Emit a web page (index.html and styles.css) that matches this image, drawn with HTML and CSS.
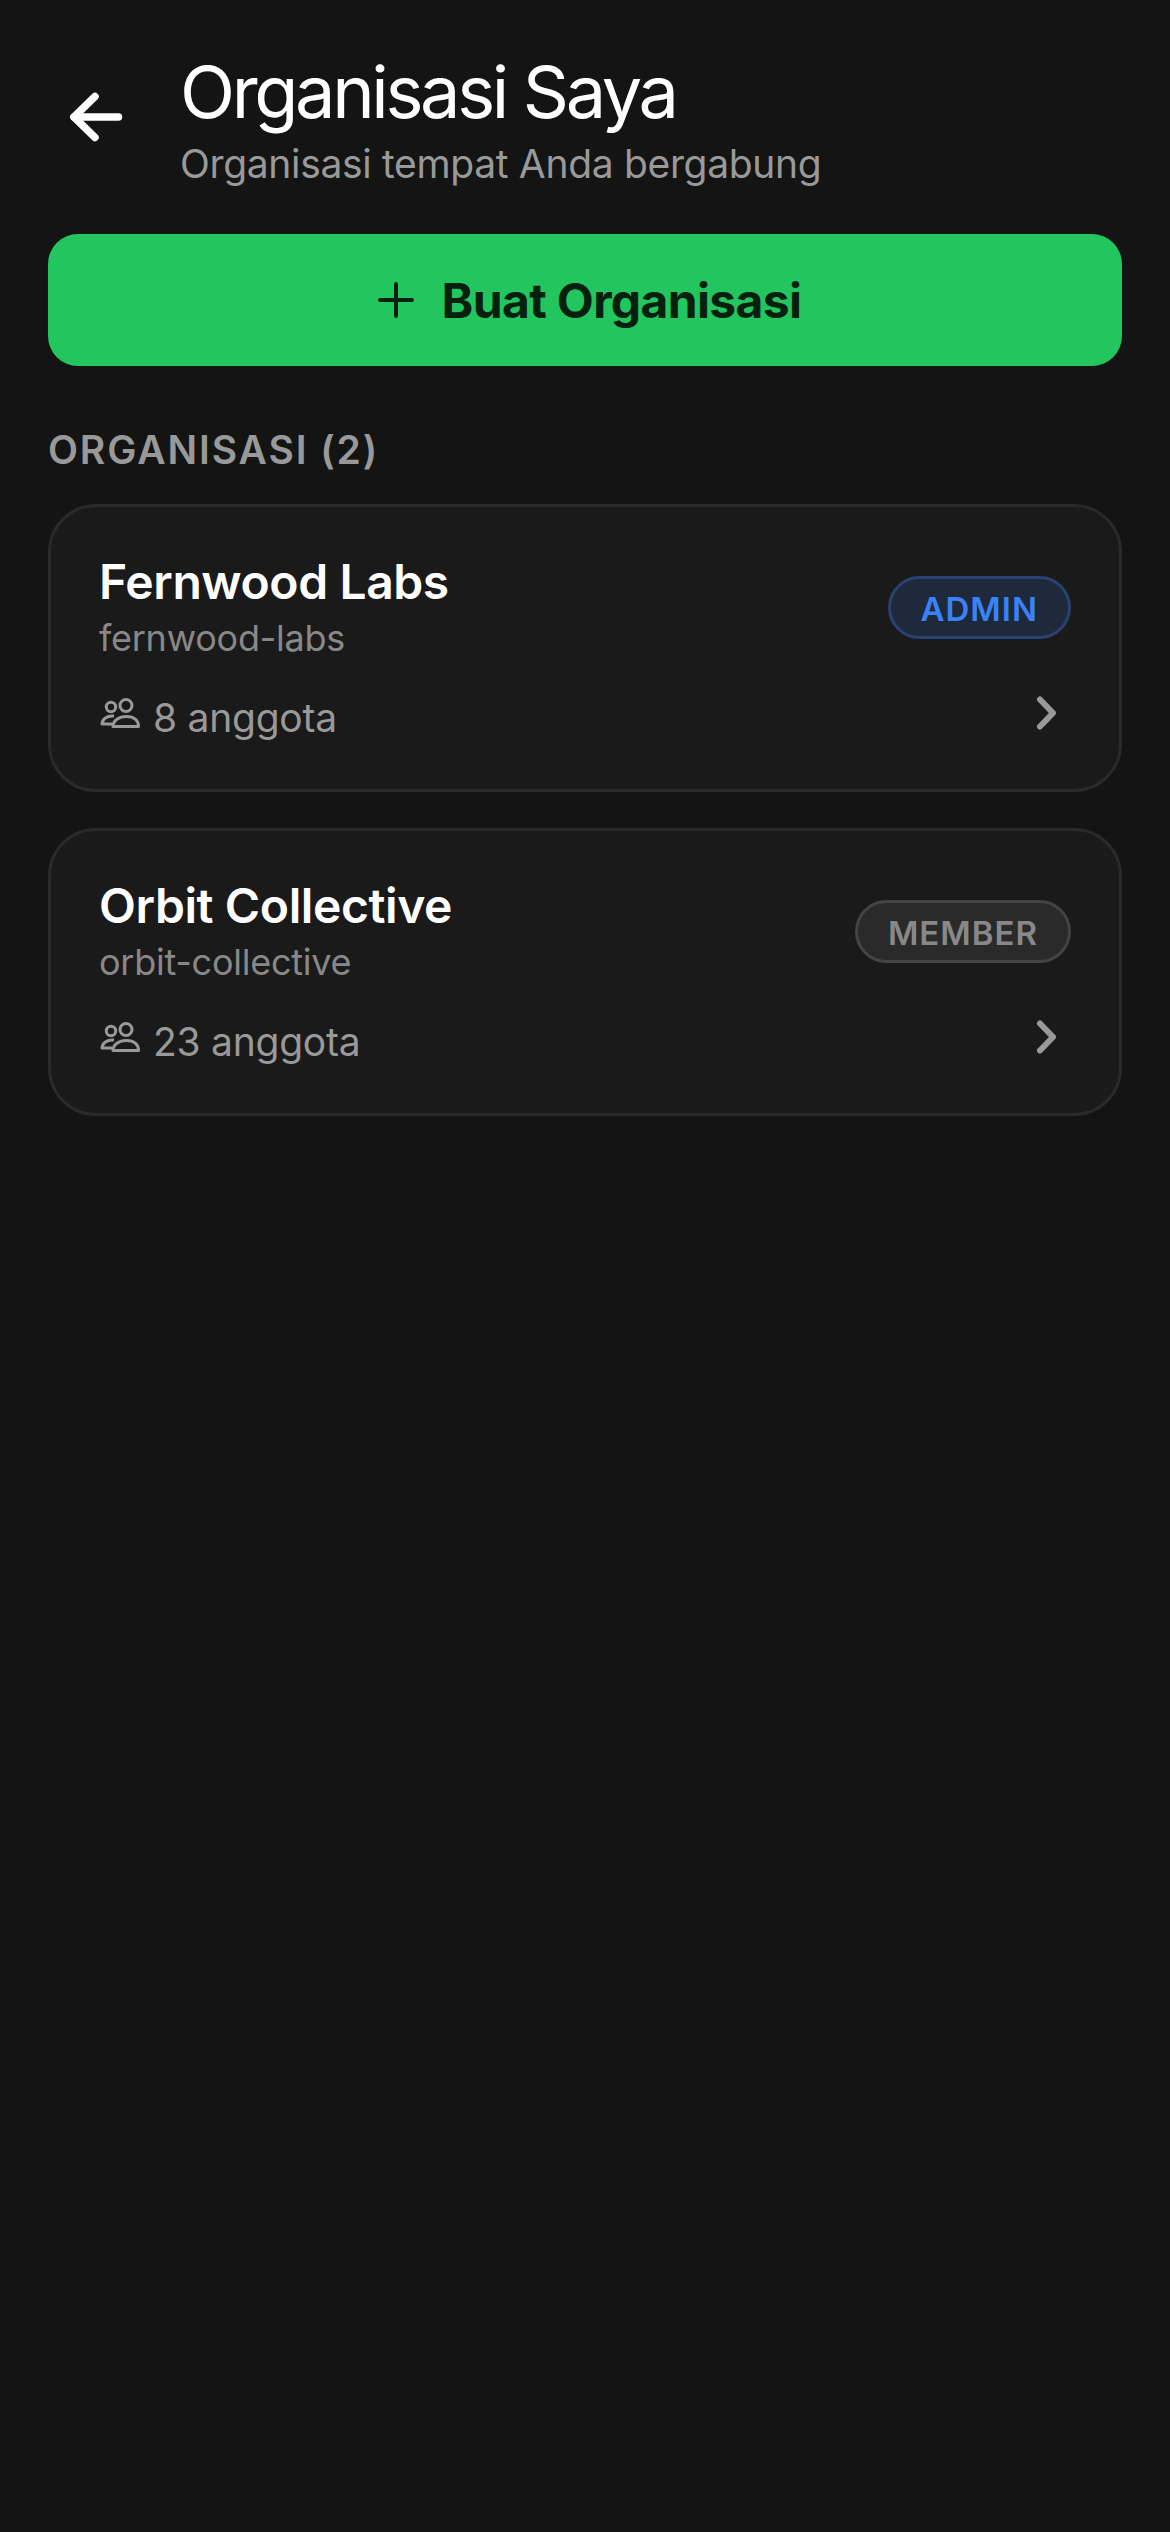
FILE: index.html
```html
<!DOCTYPE html>
<html lang="id">
<head>
<meta charset="utf-8">
<title>Organisasi Saya</title>
<link rel="stylesheet" href="styles.css">
</head>
<body>
<main class="screen">
  <header class="topbar">
    <button class="back" aria-label="Kembali">
      <svg viewBox="0 0 60 60" width="60" height="60" fill="none" stroke="#fff" stroke-width="7.5" stroke-linecap="round" stroke-linejoin="round"><path d="M49.500 30H5"/><path d="M26 9.500 5 30l21 20.500"/></svg>
    </button>
    <div class="heading">
      <h1>Organisasi Saya</h1>
      <p>Organisasi tempat Anda bergabung</p>
    </div>
  </header>

  <button class="create">
    <svg viewBox="0 0 36 36" width="36" height="36" fill="none" stroke="#06200f" stroke-width="4" stroke-linecap="round"><path d="M18 2v32M2 18h32"/></svg>
    <span>Buat Organisasi</span>
  </button>

  <h2 class="section">ORGANISASI (2)</h2>

  <ul class="orgs">
    <li class="card">
      <div class="card-top">
        <div class="names">
          <h3>Fernwood Labs</h3>
          <p>fernwood-labs</p>
        </div>
        <span class="badge admin">ADMIN</span>
      </div>
      <div class="card-bottom">
        <div class="members">
          <svg viewBox="0 0 42 30" width="42" height="30" fill="none" stroke="#999" stroke-width="3" stroke-linejoin="round"><circle cx="12" cy="9" r="4.700"/><circle cx="27" cy="7.500" r="6"/><path d="M15 18c-7-.5-12 3-12 8h10"/><path d="M14 28.500c0-6 6-10 13.500-10s12 4 12 10z"/></svg>
          <span>8 anggota</span>
        </div>
        <svg class="chev" viewBox="0 0 24 36" width="24" height="36" fill="none" stroke="#999" stroke-width="6" stroke-linecap="round" stroke-linejoin="round"><path d="M8 4.500 21 18 8 31.500"/></svg>
      </div>
    </li>
    <li class="card">
      <div class="card-top">
        <div class="names">
          <h3>Orbit Collective</h3>
          <p>orbit-collective</p>
        </div>
        <span class="badge member">MEMBER</span>
      </div>
      <div class="card-bottom">
        <div class="members">
          <svg viewBox="0 0 42 30" width="42" height="30" fill="none" stroke="#999" stroke-width="3" stroke-linejoin="round"><circle cx="12" cy="9" r="4.700"/><circle cx="27" cy="7.500" r="6"/><path d="M15 18c-7-.5-12 3-12 8h10"/><path d="M14 28.500c0-6 6-10 13.500-10s12 4 12 10z"/></svg>
          <span>23 anggota</span>
        </div>
        <svg class="chev" viewBox="0 0 24 36" width="24" height="36" fill="none" stroke="#999" stroke-width="6" stroke-linecap="round" stroke-linejoin="round"><path d="M8 4.500 21 18 8 31.500"/></svg>
      </div>
    </li>
  </ul>
</main>
</body>
</html>
```

FILE: styles.css
```css
* { box-sizing: border-box; }

html, body {
  margin: 0;
  background: #141414;
}

body {
  font-family: Inter, "Noto Sans", sans-serif;
  color: #fff;
}

.screen {
  min-height: 2532px;
  padding: 48px 48px 0;
}

.topbar {
  display: flex;
  align-items: center;
  gap: 51px;
  padding-left: 21px;
  height: 138px;
}

.back {
  flex: none;
  width: 60px;
  height: 60px;
  padding: 0;
  background: none;
  border: 0;
  display: flex;
}

h1 {
  margin: 0 0 3px;
  font-size: 72px;
  line-height: 90px;
  font-weight: 400;
  letter-spacing: -3.35px;
}

.heading p {
  margin: 0;
  font-size: 39px;
  line-height: 48px;
  letter-spacing: -0.33px;
  color: #999;
}

.create {
  margin-top: 48px;
  width: 100%;
  height: 132px;
  padding: 0 0 0 9px;
  display: flex;
  align-items: center;
  justify-content: center;
  gap: 28px;
  background: #22c55e;
  border: 0;
  border-radius: 30px;
  color: #06200f;
  font: 700 48px Inter, sans-serif;
  letter-spacing: -0.65px;
}

.section {
  margin: 60px 0 0;
  font-size: 39px;
  line-height: 48px;
  font-weight: 600;
  letter-spacing: 1.9px;
  color: #999;
}

.orgs {
  list-style: none;
  margin: 30px 0 0;
  padding: 0;
  display: flex;
  flex-direction: column;
  gap: 36px;
}

.card {
  height: 288px;
  padding: 48px 48px 0;
  background: #1a1a1a;
  border: 3px solid #2a2a2a;
  border-radius: 48px;
}

.card-top {
  display: flex;
  justify-content: space-between;
  align-items: flex-start;
}

h3 {
  margin: 0 0 2px;
  font-size: 48px;
  line-height: 54px;
  font-weight: 600;
  letter-spacing: -0.4px;
}

.names p {
  margin: 0;
  font-size: 36px;
  line-height: 54px;
  letter-spacing: -0.25px;
  color: #888;
}

.badge {
  height: 63px;
  margin-top: 21px;
  padding: 3px 30px 0;
  border-radius: 32px;
  border: 3px solid;
  display: flex;
  align-items: center;
  font-size: 33px;
  font-weight: 600;
  letter-spacing: 1px;
}

.admin {
  color: #3b82f6;
  background: #1e293b;
  border-color: #2a4272;
}

.member {
  color: #888;
  background: #2a2a2a;
  border-color: #444;
}

.card-bottom {
  margin-top: 30px;
  display: flex;
  justify-content: space-between;
  align-items: flex-start;
}

.members {
  display: flex;
  align-items: flex-start;
  gap: 12px;
  font-size: 39px;
  line-height: 46px;
  letter-spacing: -0.25px;
  color: #999;
}

.members svg {
  margin-top: 3px;
}

.chev {
  display: block;
  margin-right: 15px;
}
```
